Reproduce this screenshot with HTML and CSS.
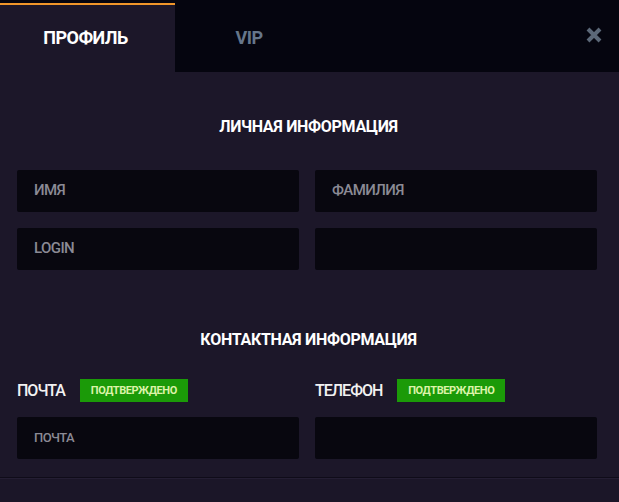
FILE: index.html
```html
<!DOCTYPE html>
<html lang="ru">
<head>
<meta charset="utf-8">
<link rel="stylesheet" href="styles.css">
</head>
<body>
<div class="modal">
  <div class="tabs">
    <div class="tab tab-active">ПРОФИЛЬ</div>
    <div class="tab tab-vip">VIP</div>
    <div class="tabs-fill"></div>
    <div class="close">
      <svg width="18" height="18" viewBox="0 0 18 18"><path d="M3 3 L15 15 M15 3 L3 15" stroke="#5c6878" stroke-width="4" stroke-linecap="butt"/></svg>
    </div>
  </div>
  <div class="content">
    <h2 class="section-title first">ЛИЧНАЯ ИНФОРМАЦИЯ</h2>
    <div class="grid">
      <div class="field"><span class="ph">ИМЯ</span></div>
      <div class="field"><span class="ph">ФАМИЛИЯ</span></div>
      <div class="field"><span class="ph">LOGIN</span></div>
      <div class="field"></div>
    </div>
    <h2 class="section-title second">КОНТАКТНАЯ ИНФОРМАЦИЯ</h2>
    <div class="grid contacts">
      <div class="col">
        <div class="label-row"><span class="label">ПОЧТА</span><span class="badge">ПОДТВЕРЖДЕНО</span></div>
        <div class="field"><span class="ph small">ПОЧТА</span></div>
      </div>
      <div class="col">
        <div class="label-row"><span class="label">ТЕЛЕФОН</span><span class="badge">ПОДТВЕРЖДЕНО</span></div>
        <div class="field"></div>
      </div>
    </div>
  </div>
  <div class="footer"></div>
</div>
</body>
</html>
```
FILE: styles.css
```css
* { box-sizing: border-box; margin: 0; padding: 0; }
html, body { width: 619px; height: 502px; overflow: hidden; }
body {
  background: #1c1729;
  font-family: "Roboto", "Liberation Sans", sans-serif;
  color: #fff;
}
.modal { display: flex; flex-direction: column; height: 502px; }
.tabs {
  display: flex;
  height: 72px;
  background: #05050f;
  padding-top: 3px;
  align-items: stretch;
}
.tab {
  display: flex;
  align-items: center;
  justify-content: center;
  font-weight: 700;
  font-size: 18px;
  letter-spacing: -0.5px;
}
.tab-active {
  width: 175px;
  background: #1c1729;
  border-top: 2px solid #f0962a;
  color: #fff;
  padding-right: 4px;
  padding-bottom: 2px;
}
.tab-vip {
  width: 146px;
  color: #66768a;
  padding-left: 2px;
}
.tabs-fill { flex: 1; }
.close {
  width: 52px;
  display: flex;
  align-items: center;
  justify-content: center;
  padding-left: 2px;
  padding-bottom: 5px;
}
.close svg { display: block; }
.content { padding: 0 22px 0 17px; flex: 1; }
.section-title {
  text-align: center;
  font-size: 16px;
  font-weight: 700;
  letter-spacing: -0.3px;
  line-height: 20px;
  padding-left: 3px;
}
.section-title.first { margin-top: 45px; margin-bottom: 33px; }
.section-title.second { margin-top: 60px; margin-bottom: 29px; }
.grid {
  display: grid;
  grid-template-columns: 282px 282px;
  column-gap: 16px;
  row-gap: 16px;
}
.field {
  height: 42px;
  background: #08070f;
  border-radius: 2px;
  display: flex;
  align-items: center;
  padding-left: 17px;
  padding-bottom: 2px;
}
.ph {
  color: #8b8a95;
  font-size: 15px;
  font-weight: 500;
  letter-spacing: -0.6px;
}
.ph.small { font-size: 13px; }
.col { display: flex; flex-direction: column; }
.label-row {
  display: flex;
  align-items: center;
  height: 23px;
  margin-bottom: 15px;
}
.label {
  font-size: 16px;
  font-weight: 500;
  letter-spacing: -1px;
  color: #f2f2f2;
  margin-right: 15px;
}
.badge {
  background: #1b9a08;
  color: #dcf3a8;
  font-size: 11px;
  font-weight: 700;
  letter-spacing: -0.4px;
  height: 23px;
  width: 108px;
  display: flex;
  align-items: center;
  justify-content: center;
}
.footer {
  height: 25px;
  border-top: 1px solid #0f0c19;
  background: #1b1628;
  box-shadow: inset 0 1px 0 #241e33;
}
```
